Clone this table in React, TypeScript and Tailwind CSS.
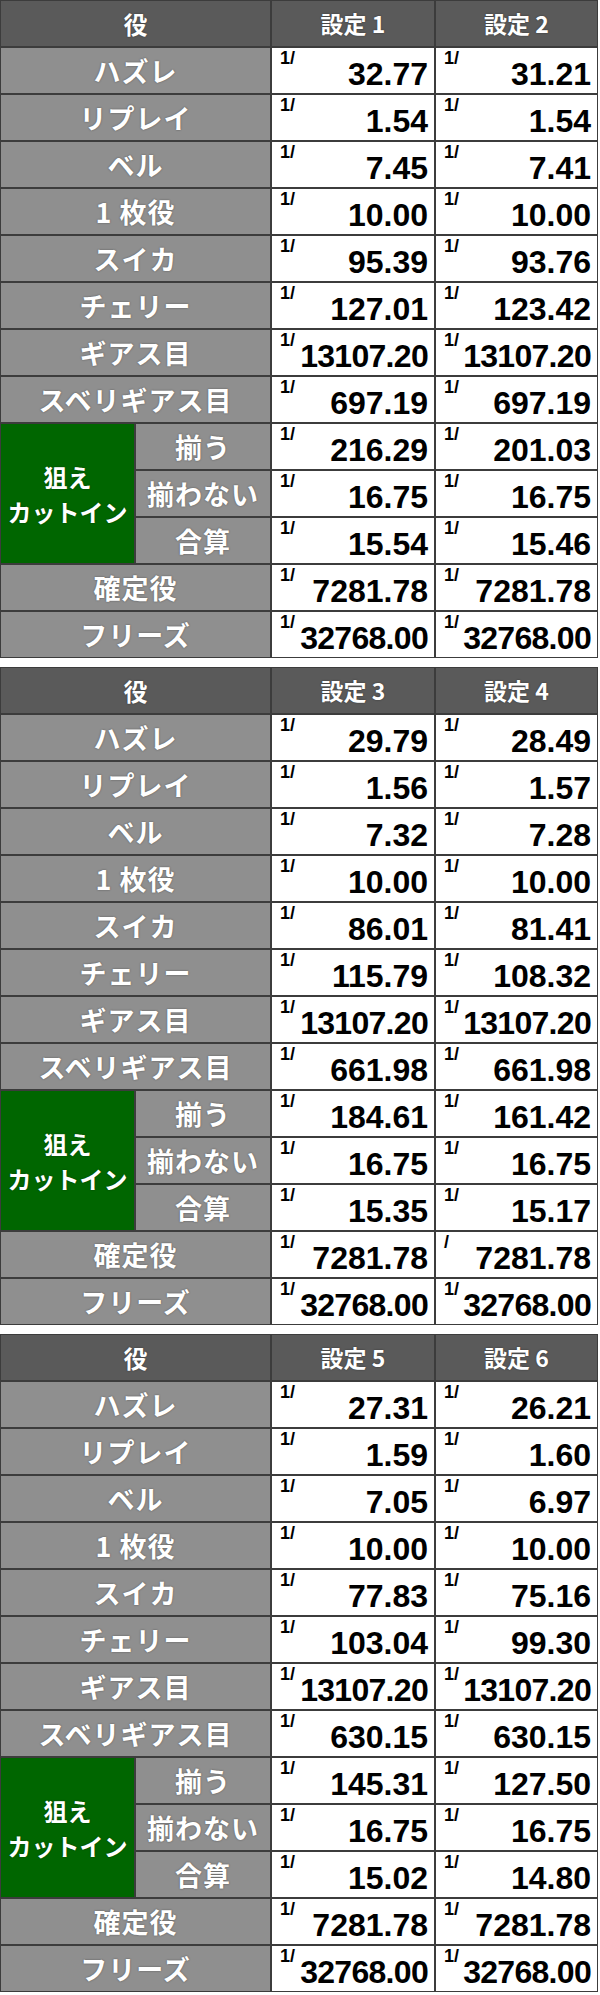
import React from "react";

type Row = { label: string; sub?: string; a: string; b: string; aPrefix?: string; bPrefix?: string };

type Table = { heads: [string, string]; rows: Row[] };

const LABELS = [
  "ハズレ",
  "リプレイ",
  "ベル",
  "1 枚役",
  "スイカ",
  "チェリー",
  "ギアス目",
  "スベリギアス目",
  "揃う",
  "揃わない",
  "合算",
  "確定役",
  "フリーズ",
];

function build(heads: [string, string], a: string[], b: string[]): Table {
  return {
    heads,
    rows: LABELS.map((label, i) => ({ label, a: a[i], b: b[i] })),
  };
}

const tables: Table[] = [
  build(
    ["設定 1", "設定 2"],
    ["32.77", "1.54", "7.45", "10.00", "95.39", "127.01", "13107.20", "697.19", "216.29", "16.75", "15.54", "7281.78", "32768.00"],
    ["31.21", "1.54", "7.41", "10.00", "93.76", "123.42", "13107.20", "697.19", "201.03", "16.75", "15.46", "7281.78", "32768.00"]
  ),
  build(
    ["設定 3", "設定 4"],
    ["29.79", "1.56", "7.32", "10.00", "86.01", "115.79", "13107.20", "661.98", "184.61", "16.75", "15.35", "7281.78", "32768.00"],
    ["28.49", "1.57", "7.28", "10.00", "81.41", "108.32", "13107.20", "661.98", "161.42", "16.75", "15.17", "7281.78", "32768.00"]
  ),
  build(
    ["設定 5", "設定 6"],
    ["27.31", "1.59", "7.05", "10.00", "77.83", "103.04", "13107.20", "630.15", "145.31", "16.75", "15.02", "7281.78", "32768.00"],
    ["26.21", "1.60", "6.97", "10.00", "75.16", "99.30", "13107.20", "630.15", "127.50", "16.75", "14.80", "7281.78", "32768.00"]
  ),
];

// 設定4 の確定役だけ元画像で「1」が抜けている
tables[1].rows[11].bPrefix = "/";

const jp = "font-['Noto_Sans_CJK_JP',sans-serif] font-bold text-white [text-shadow:0_0_2px_rgba(0,0,0,0.45)]";

function ValueCell({ value, prefix = "1/" }: { value: string; prefix?: string }) {
  const long = value.length >= 8;
  return (
    <div className="flex h-[45px] justify-between bg-white pl-2 pr-[6px] font-['Liberation_Sans',Arial,sans-serif] font-bold text-black">
      <span className="self-start pt-px text-[18px] leading-none">{prefix}</span>
      <span
        className={
          long
            ? "self-end pb-[3px] text-[32px] leading-none tracking-[-0.7px] whitespace-nowrap"
            : "self-end pb-[3px] text-[32px] leading-none whitespace-nowrap"
        }
      >
        {value}
      </span>
    </div>
  );
}

function LabelCell({ text, wide = true }: { text: string; wide?: boolean }) {
  return (
    <div
      className={
        wide
          ? `col-span-2 flex h-[45px] items-center justify-center bg-[#8f8f8f] text-[27px] leading-none tracking-[1px] ${jp}`
          : `flex h-[45px] items-center justify-center bg-[#8f8f8f] text-[27px] leading-none tracking-[1px] ${jp}`
      }
    >
      {text}
    </div>
  );
}

function RateTable({ table }: { table: Table }) {
  return (
    <div className="grid w-[598px] grid-cols-[133px_134px_162px_161px] gap-[2px] bg-[#3c3c3c] p-px">
      {/* ヘッダー */}
      <div className={`col-span-2 flex h-[45px] items-center justify-center bg-[#5a5a5a] text-[24px] leading-none ${jp}`}>
        役
      </div>
      <div className={`flex h-[45px] items-center justify-center bg-[#5a5a5a] text-[23px] leading-none ${jp}`}>
        {table.heads[0]}
      </div>
      <div className={`flex h-[45px] items-center justify-center bg-[#5a5a5a] text-[23px] leading-none ${jp}`}>
        {table.heads[1]}
      </div>

      {table.rows.map((row, i) => {
        const inGroup = i >= 8 && i <= 10;
        return (
          <React.Fragment key={row.label}>
            {i === 8 && (
              <div
                className={`row-span-3 flex flex-col items-center justify-center bg-[#006600] text-[24px] leading-[35px] ${jp}`}
              >
                <span className="block">狙え</span>
                <span className="block">カットイン</span>
              </div>
            )}
            {inGroup ? <LabelCell text={row.label} wide={false} /> : <LabelCell text={row.label} />}
            <ValueCell value={row.a} prefix={row.aPrefix} />
            <ValueCell value={row.b} prefix={row.bPrefix} />
          </React.Fragment>
        );
      })}
    </div>
  );
}

export default function App() {
  return (
    <div className="flex w-[600px] flex-col gap-[9px] bg-white">
      {tables.map((t) => (
        <RateTable key={t.heads[0]} table={t} />
      ))}
    </div>
  );
}
